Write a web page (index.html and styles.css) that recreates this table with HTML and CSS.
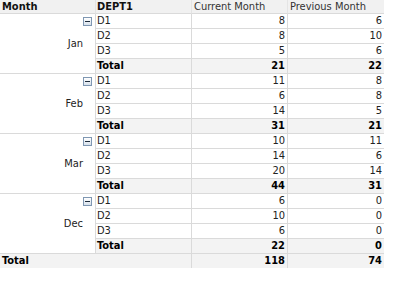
FILE: index.html
```html
<!DOCTYPE html>
<html>
<head>
<meta charset="utf-8">
<link rel="stylesheet" href="styles.css">
</head>
<body>
<table class="pivot">
  <colgroup><col class="c1"><col class="c2"><col class="c3"><col class="c4"></colgroup>
  <thead>
    <tr class="head">
      <th class="dim">Month</th>
      <th class="dim">DEPT1</th>
      <th class="expr">Current Month</th>
      <th class="expr">Previous Month</th>
    </tr>
  </thead>
  <tbody>
    <tr>
      <td class="month" rowspan="4"><span class="collapse"></span>Jan</td>
      <td class="dept">D1</td><td class="num">8</td><td class="num">6</td>
    </tr>
    <tr><td class="dept">D2</td><td class="num">8</td><td class="num">10</td></tr>
    <tr><td class="dept">D3</td><td class="num">5</td><td class="num">6</td></tr>
    <tr class="sub"><td class="dept">Total</td><td class="num">21</td><td class="num">22</td></tr>

    <tr>
      <td class="month" rowspan="4"><span class="collapse"></span>Feb</td>
      <td class="dept">D1</td><td class="num">11</td><td class="num">8</td>
    </tr>
    <tr><td class="dept">D2</td><td class="num">6</td><td class="num">8</td></tr>
    <tr><td class="dept">D3</td><td class="num">14</td><td class="num">5</td></tr>
    <tr class="sub"><td class="dept">Total</td><td class="num">31</td><td class="num">21</td></tr>

    <tr>
      <td class="month" rowspan="4"><span class="collapse"></span>Mar</td>
      <td class="dept">D1</td><td class="num">10</td><td class="num">11</td>
    </tr>
    <tr><td class="dept">D2</td><td class="num">14</td><td class="num">6</td></tr>
    <tr><td class="dept">D3</td><td class="num">20</td><td class="num">14</td></tr>
    <tr class="sub"><td class="dept">Total</td><td class="num">44</td><td class="num">31</td></tr>

    <tr>
      <td class="month" rowspan="4"><span class="collapse"></span>Dec</td>
      <td class="dept">D1</td><td class="num">6</td><td class="num">0</td>
    </tr>
    <tr><td class="dept">D2</td><td class="num">10</td><td class="num">0</td></tr>
    <tr><td class="dept">D3</td><td class="num">6</td><td class="num">0</td></tr>
    <tr class="sub"><td class="dept">Total</td><td class="num">22</td><td class="num">0</td></tr>

    <tr class="grand">
      <td class="gt" colspan="2">Total</td><td class="num">118</td><td class="num last">74</td>
    </tr>
  </tbody>
</table>
</body>
</html>
```

FILE: styles.css
```css
html, body {
  margin: 0;
  padding: 0;
  background: #ffffff;
}
body {
  font-family: "DejaVu Sans Condensed", "DejaVu Sans", sans-serif;
  font-size: 11px;
  color: #222222;
}
.pivot {
  border-collapse: separate;
  border-spacing: 0;
  table-layout: fixed;
  width: 384px;
}
.c1, .c2, .c3, .c4 { width: 96px; }

.pivot th, .pivot td {
  padding: 0;
  height: 14px;
  line-height: 14px;
  border-bottom: 1px solid #dadada;
  border-right: 1px solid #dadada;
  white-space: nowrap;
  overflow: hidden;
}
.pivot th:last-child, .pivot td:last-child { border-right: none; }

.head th {
  height: 13px;
  line-height: 13px;
  background: #f1f1f1;
  text-align: left;
  color: #222222;
  border-right-color: #e4e4e4;
}
.head .dim { font-weight: bold; color: #111; padding-left: 2px; }
.head .dim + .dim { padding-left: 1px; }
.head .expr { font-weight: normal; padding-left: 2px; color: #333; }

.month {
  position: relative;
  text-align: right;
  vertical-align: middle;
  padding-right: 12px !important;
  background: #ffffff;
}
.collapse {
  position: absolute;
  top: 3px;
  right: 3px;
  width: 7px;
  height: 7px;
  border: 1px solid #7f97b2;
  background: linear-gradient(#ffffff, #d7e1ec);
}
.collapse::after {
  content: "";
  position: absolute;
  left: 1px;
  top: 3px;
  width: 5px;
  height: 1px;
  background: #1c2a3a;
}

.dept { padding-left: 1px !important; }
.num { text-align: right; padding-right: 2px !important; }

.sub td {
  background: #f3f3f3;
  font-weight: bold;
  color: #000;
}
.grand td {
  background: #f3f3f3;
  font-weight: bold;
  color: #000;
  border-bottom: none;
}
.grand .gt { padding-left: 2px; }
```
